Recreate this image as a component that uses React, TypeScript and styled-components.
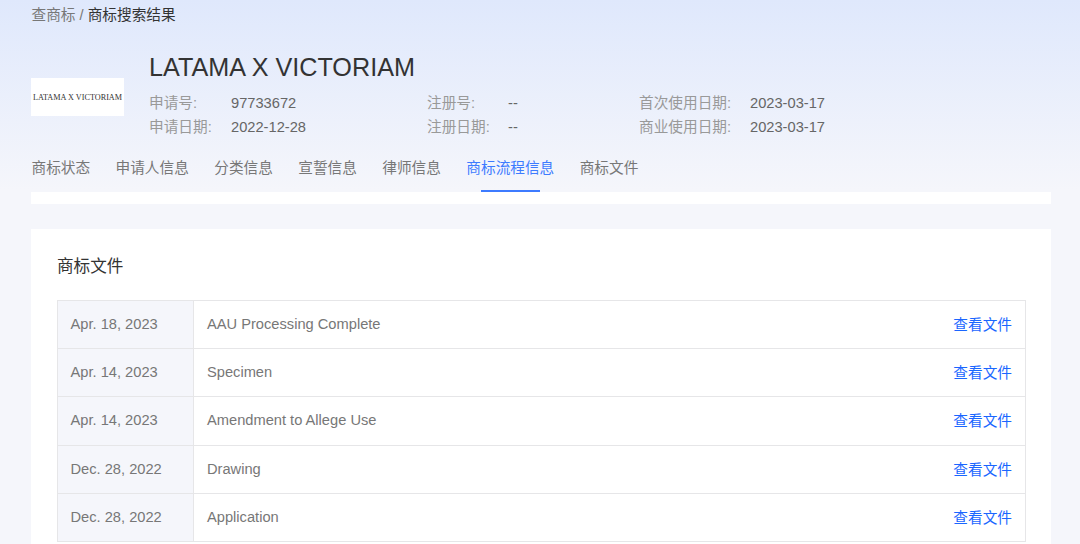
import styled, { createGlobalStyle } from 'styled-components';

const GlobalStyle = createGlobalStyle`
  html, body {
    margin: 0;
    padding: 0;
    height: 544px;
    overflow: hidden;
    background: #f5f6fb;
    font-family: "Liberation Sans", "Noto Sans CJK SC", sans-serif;
  }
`;

const Page = styled.div`
  width: 1080px;
  height: 544px;
  overflow: hidden;
  background: linear-gradient(180deg, #dfe8fc 0px, #f5f6fb 190px);
`;
const Top = styled.header`
  padding: 5px 29px 0 31px;
`;
const Breadcrumb = styled.div`
  padding-left: 0.5px;
  font-size: 14.67px;
  line-height: 21px;
  color: #777;
  span {
    color: #333;
  }
`;
const Summary = styled.section`
  display: flex;
  align-items: center;
  gap: 25px;
  margin-top: 25px;
`;
const Logo = styled.div`
  width: 93px;
  height: 38px;
  margin-top: 4px;
  background: #fff;
  display: flex;
  align-items: center;
  justify-content: center;
  font-family: "Liberation Serif", serif;
  font-size: 8.2px;
  white-space: nowrap;
  color: #333;
`;
const Info = styled.div`
  display: flex;
  flex-direction: column;
`;
const Title = styled.h1`
  margin: 0 0 8px;
  font-size: 25.2px;
  line-height: 32px;
  font-weight: 400;
  color: #333;
`;
const Meta = styled.div`
  display: grid;
  grid-template-columns: 82px 196px 81px 131px 111px auto;
  grid-auto-rows: 24px;
  align-items: baseline;
  font-size: 14.67px;
`;
const Label = styled.span`
  color: #999;
`;
const Value = styled.span`
  color: #666;
`;
const Tabs = styled.nav`
  display: flex;
  gap: 25.4px;
  margin-top: 11px;
  padding-left: 0.5px;
`;
const Tab = styled.div<{ $active?: boolean }>`
  position: relative;
  height: 42px;
  line-height: 36px;
  font-size: 14.67px;
  color: ${(props) => (props.$active ? '#3d7bff' : '#777')};
  &::after {
    content: '';
    display: ${(props) => (props.$active ? 'block' : 'none')};
    position: absolute;
    left: 50%;
    bottom: 0;
    width: 59px;
    height: 2px;
    margin-left: -29.5px;
    background: #3d7bff;
  }
`;
const Strip = styled.div`
  height: 12px;
  margin: 0 29px 0 31px;
  background: #fff;
`;
const Card = styled.section`
  margin: 25px 29px 0 31px;
  padding: 26px 25px 0 26px;
  background: #fff;
  height: 400px;
`;
const CardTitle = styled.h2`
  margin: 0 0 22px;
  font-size: 16.6px;
  line-height: 23px;
  font-weight: 400;
  color: #333;
`;
const Table = styled.table`
  width: 969px;
  border-collapse: collapse;
  table-layout: fixed;
  font-size: 14.67px;
  color: #777;
  tr {
    height: 48.2px;
  }
  td {
    border: 1px solid #e6e6e8;
    padding: 0 13px 1px;
  }
`;
const DateCell = styled.td`
  width: 109px;
  background: #f5f6fb;
  && {
    padding-left: 12.5px;
    padding-right: 13.5px;
  }
`;
const NameCell = styled.td`
  && {
    border-right: none;
  }
`;
const ActionCell = styled.td`
  width: 72px;
  text-align: right;
  && {
    border-left: none;
    padding-bottom: 2px;
  }
`;
const FileLink = styled.a`
  color: #1a66ff;
  text-decoration: none;
`;

const tabs = ['商标状态', '申请人信息', '分类信息', '宣誓信息', '律师信息', '商标流程信息', '商标文件'];
const files = [
  { date: 'Apr. 18, 2023', name: 'AAU Processing Complete' },
  { date: 'Apr. 14, 2023', name: 'Specimen' },
  { date: 'Apr. 14, 2023', name: 'Amendment to Allege Use' },
  { date: 'Dec. 28, 2022', name: 'Drawing' },
  { date: 'Dec. 28, 2022', name: 'Application' },
];

function App() {
  return (
    <Page>
      <GlobalStyle />
      <Top>
        <Breadcrumb>
          查商标 / <span>商标搜索结果</span>
        </Breadcrumb>
        <Summary>
          <Logo>LATAMA X VICTORIAM</Logo>
          <Info>
            <Title>LATAMA X VICTORIAM</Title>
            <Meta>
              <Label>申请号:</Label>
              <Value>97733672</Value>
              <Label>注册号:</Label>
              <Value>--</Value>
              <Label>首次使用日期:</Label>
              <Value>2023-03-17</Value>
              <Label>申请日期:</Label>
              <Value>2022-12-28</Value>
              <Label>注册日期:</Label>
              <Value>--</Value>
              <Label>商业使用日期:</Label>
              <Value>2023-03-17</Value>
            </Meta>
          </Info>
        </Summary>
        <Tabs>
          {tabs.map((tab) => (
            <Tab key={tab} $active={tab === '商标流程信息'}>
              {tab}
            </Tab>
          ))}
        </Tabs>
      </Top>
      <Strip />
      <Card>
        <CardTitle>商标文件</CardTitle>
        <Table>
          <tbody>
            {files.map((file) => (
              <tr key={file.date + file.name}>
                <DateCell>{file.date}</DateCell>
                <NameCell>{file.name}</NameCell>
                <ActionCell>
                  <FileLink href="#">查看文件</FileLink>
                </ActionCell>
              </tr>
            ))}
          </tbody>
        </Table>
      </Card>
    </Page>
  );
}

export default App;
